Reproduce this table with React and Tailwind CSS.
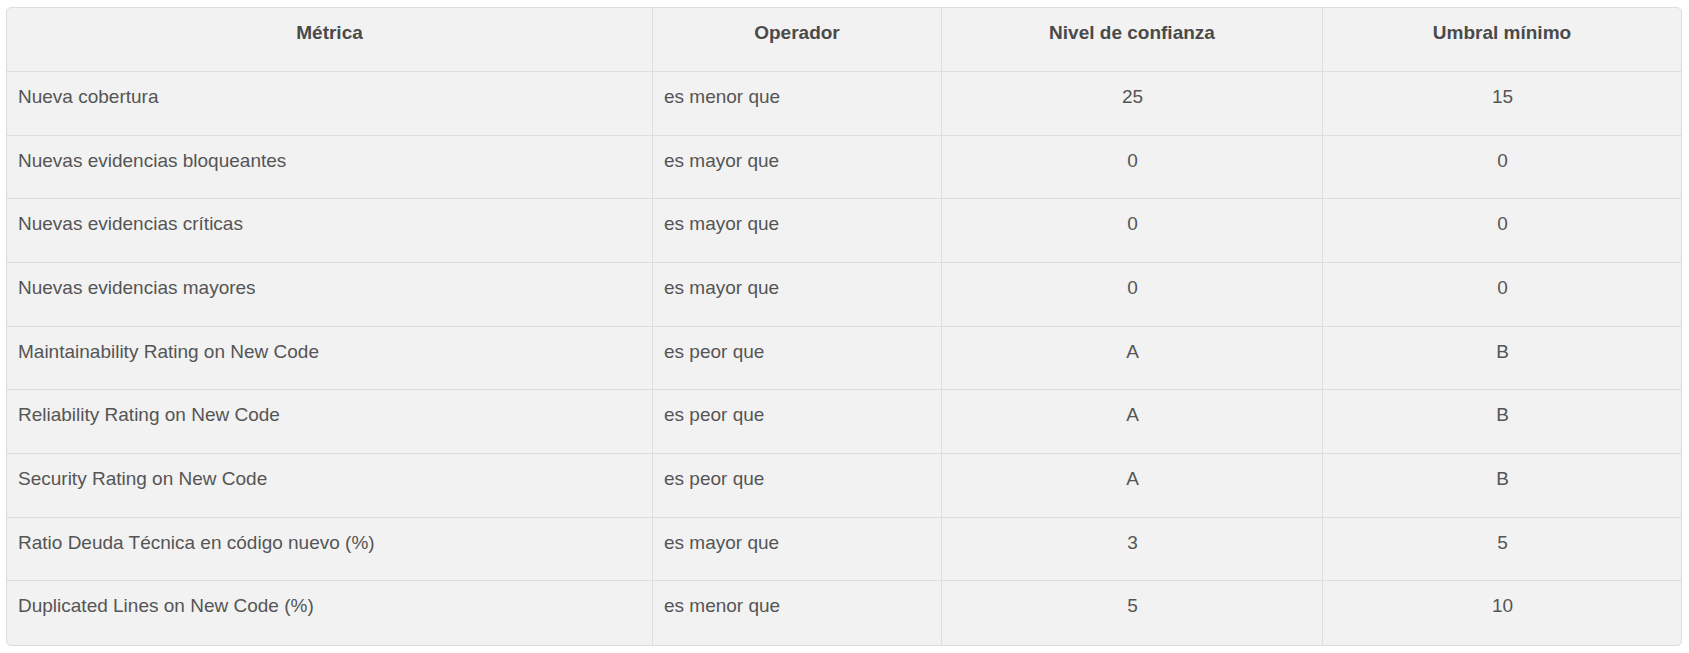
const ROWS = [
  ["Nueva cobertura", "es menor que", "25", "15"],
  ["Nuevas evidencias bloqueantes", "es mayor que", "0", "0"],
  ["Nuevas evidencias críticas", "es mayor que", "0", "0"],
  ["Nuevas evidencias mayores", "es mayor que", "0", "0"],
  ["Maintainability Rating on New Code", "es peor que", "A", "B"],
  ["Reliability Rating on New Code", "es peor que", "A", "B"],
  ["Security Rating on New Code", "es peor que", "A", "B"],
  ["Ratio Deuda Técnica en código nuevo (%)", "es mayor que", "3", "5"],
  ["Duplicated Lines on New Code (%)", "es menor que", "5", "10"],
];

const HEADERS = ["Métrica", "Operador", "Nivel de confianza", "Umbral mínimo"];

export default function App() {
  return (
    <div className="min-h-[653px] bg-white pl-[6px] pt-[7px] font-['Liberation_Sans',Arial,sans-serif]">
      <div className="w-[1676px] overflow-hidden rounded-[5px] border border-[#dddddd] bg-[#f2f2f2]">
        <table className="w-full table-fixed border-separate border-spacing-0 text-[19px] leading-[28px] text-[#555555]">
          <colgroup>
            <col className="w-[645px]" />
            <col className="w-[289px]" />
            <col className="w-[381px]" />
            <col className="w-[359px]" />
          </colgroup>
          <thead>
            <tr className="h-[64px]">
              {HEADERS.map((h, i) => (
                <th
                  key={h}
                  className={`border-b border-[#dddddd] px-[10px] pt-[11px] pb-[24px] text-center align-top font-bold text-[#4a4a4a] ${i > 0 ? "border-l" : ""}`}
                >
                  {h}
                </th>
              ))}
            </tr>
          </thead>
          <tbody>
            {ROWS.map((row, r) => (
              <tr key={row[0]} className="h-[63.67px]">
                {row.map((cell, i) => (
                  <td
                    key={i}
                    className={`border-[#dddddd] pt-[11px] pb-[19px] align-top ${i === 0 ? "pl-[11px]" : "border-l pl-[11px]"} ${i > 1 ? "text-center pl-[10px] pr-[10px]" : ""} ${r < ROWS.length - 1 ? "border-b" : ""}`}
                  >
                    {cell}
                  </td>
                ))}
              </tr>
            ))}
          </tbody>
        </table>
      </div>
    </div>
  );
}
